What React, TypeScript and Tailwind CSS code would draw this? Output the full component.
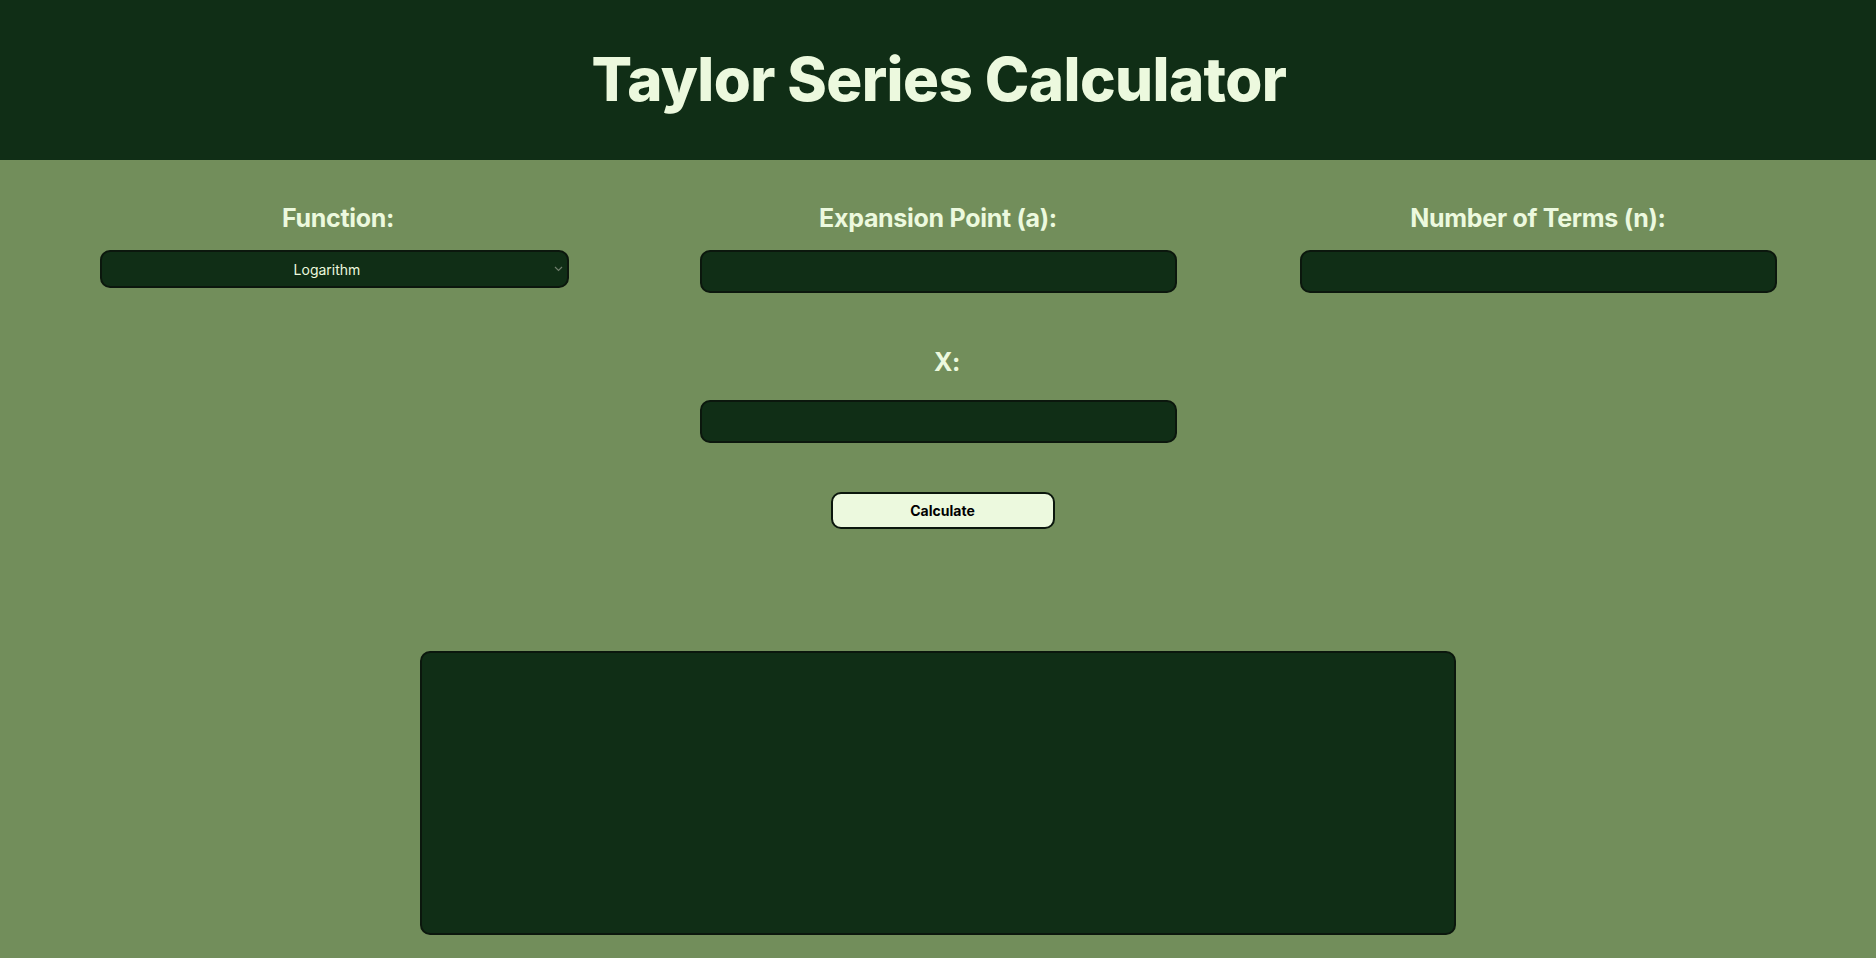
import { useState } from "react";

const font = { fontFamily: "Inter, 'Noto Sans', sans-serif" };

function Field({
  label,
  gap,
  labelCls = "",
  children,
}: {
  label: string;
  gap: string;
  labelCls?: string;
  children: React.ReactNode;
}) {
  return (
    <div className="flex flex-col items-center">
      <label className={`text-[25px] leading-[32px] font-bold text-[#ecf9de] tracking-[-0.3px] ${labelCls}`}>{label}</label>
      <div className={gap}>{children}</div>
    </div>
  );
}

export default function App() {
  const [fn, setFn] = useState("log");
  const [a, setA] = useState("");
  const [n, setN] = useState("");
  const [x, setX] = useState("");

  const inputCls =
    "w-[477px] h-[43px] rounded-[10px] border-2 border-[#0b170d] bg-[#102e16] text-[#ecf9de] text-[14px] px-3 outline-none";

  return (
    <div className="min-h-screen bg-[#728e5b]" style={font}>
      <header className="h-[160px] bg-[#102e16] flex items-center justify-center">
        <h1 className="text-[60px] font-extrabold text-[#ecf9de] tracking-[-0.6px] pb-[2px] pl-[2px]">Taylor Series Calculator</h1>
      </header>

      <main className="flex flex-col items-center">
        <div className="grid grid-cols-3 w-full px-[38px] pt-[42px]">
          <Field label="Function:" gap="mt-[16px]">
            <div className="relative mr-[8px]">
              <select
                value={fn}
                onChange={(e) => setFn(e.target.value)}
                className="appearance-none w-[469px] h-[38px] rounded-[10px] border-2 border-[#0b170d] bg-[#102e16] text-[#ecf9de] text-[14px] text-center pr-[14px] outline-none"
              >
                <option value="log">Logarithm</option>
                <option value="exp">Exponential</option>
                <option value="sin">Sine</option>
                <option value="cos">Cosine</option>
              </select>
              <svg
                className="absolute right-[6px] top-[16px] pointer-events-none"
                width="9"
                height="6"
                viewBox="0 0 9 6"
                fill="none"
              >
                <path d="M1 1l3.5 3.5L8 1" stroke="#6f7d6c" strokeWidth="1.2" />
              </svg>
            </div>
          </Field>
          <Field label="Expansion Point (a):" gap="mt-[16px]">
            <input className={inputCls} value={a} onChange={(e) => setA(e.target.value)} />
          </Field>
          <Field label="Number of Terms (n):" gap="mt-[16px]">
            <input className={inputCls} value={n} onChange={(e) => setN(e.target.value)} />
          </Field>
        </div>

        <div className="mt-[53px]">
          <Field label="X:" gap="mt-[22px]" labelCls="pl-[18px]">
            <input className={inputCls} value={x} onChange={(e) => setX(e.target.value)} />
          </Field>
        </div>

        <button className="mt-[49px] ml-[9px] w-[224px] h-[37px] rounded-[10px] border-2 border-[#0b170d] bg-[#ecf9de] text-[14px] font-bold text-black">
          Calculate
        </button>

        <div className="mt-[122px] w-[1036px] h-[284px] rounded-[10px] border-2 border-[#0b170d] bg-[#102e16]" />
      </main>
    </div>
  );
}
